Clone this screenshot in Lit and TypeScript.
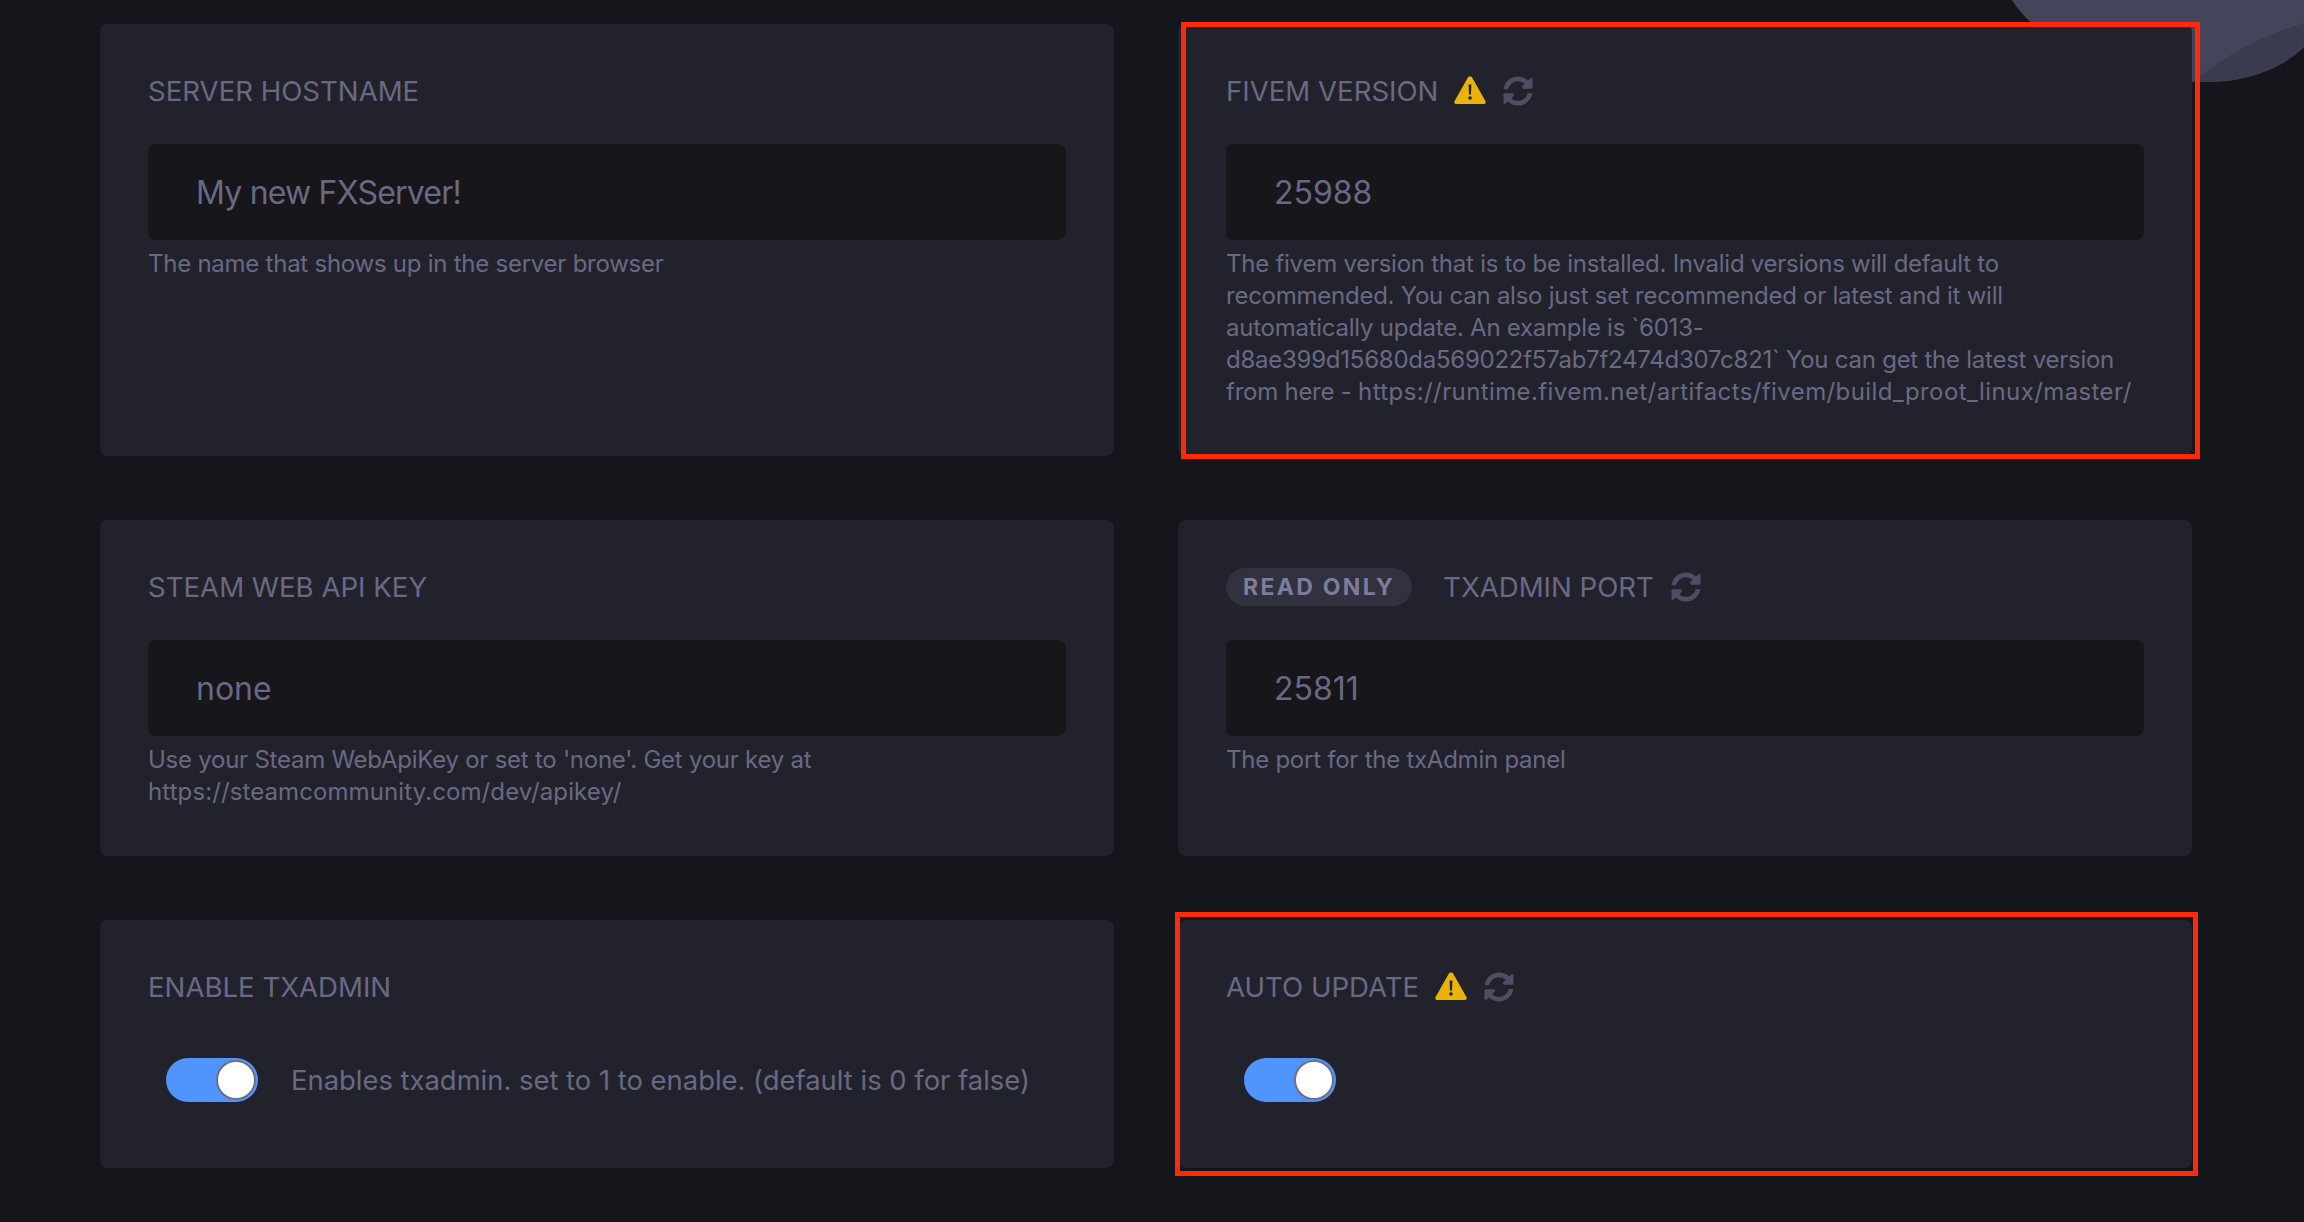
import { LitElement, html, css, svg, TemplateResult } from "lit";
import { customElement } from "lit/decorators.js";

const warnIcon = html`<svg class="icon warn" viewBox="0 0 32 28" aria-hidden="true">
  <path fill="#eab308" d="M16 0.5c1 0 1.8 0.5 2.4 1.4l13 23.2c0.9 1.6-0.2 2.9-1.9 2.9H2.5c-1.7 0-2.8-1.3-1.9-2.9l13-23.2C14.2 1 15 0.5 16 0.5z"/>
  <path fill="#22222c" d="M14.6 8.5h2.8l-0.4 10h-2z"/>
  <circle cx="16" cy="22" r="1.8" fill="#22222c"/>
</svg>`;

const syncIcon = html`<svg class="icon sync" viewBox="0 0 512 512" aria-hidden="true">
  <path fill="#4d4d63" d="M370.7 133.3C339.5 104 298.9 88 255.800 88c-77.500 .1-144.300 53.200-162.800 126.900-1.300 5.400-6.100 9.100-11.600 9.100H24.100c-7.500 0-13.200-6.800-11.800-14.200C33.900 94.900 134.800 8 256 8c66.400 0 126.800 26.100 171.300 68.700L463 41C478.100 25.900 504 36.600 504 57.900V192c0 13.300-10.700 24-24 24H345.900c-21.400 0-32.100-25.900-17-41l41.800-41.700zM32 296h134.100c21.400 0 32.100 25.900 17 41l-41.800 41.800c31.300 29.300 71.800 45.300 114.900 45.300 77.400-.1 144.300-53.100 162.800-126.800 1.300-5.400 6.100-9.100 11.600-9.100h57.300c7.500 0 13.200 6.800 11.800 14.200C478.100 417.100 377.200 504 256 504c-66.400 0-126.800-26.100-171.300-68.700L49 471C33.900 486.100 8 475.400 8 454.100V320c0-13.300 10.700-24 24-24z"/>
</svg>`;

type Field = {
  label: string;
  value?: string;
  tight?: boolean;
  desc?: string | TemplateResult;
  warn?: boolean;
  sync?: boolean;
  readOnly?: boolean;
  toggle?: boolean;
};

const fields: Field[] = [
  { label: "SERVER HOSTNAME", value: "My new FXServer!", tight: true, desc: "The name that shows up in the server browser" },
  {
    label: "FIVEM VERSION",
    value: "25988",
    warn: true,
    sync: true,
    desc: html`The fivem version that is to be installed. Invalid versions will default to recommended. You can also just set recommended or latest and it will automatically update. An example is \`6013-d8ae399d15680da569022f57ab7f2474d307c821\` You can get the latest version from here - <span class="url wide">https://runtime.fivem.net/artifacts/fivem/build_proot_linux/master/</span>`,
  },
  {
    label: "STEAM WEB API KEY",
    value: "none",
    desc: html`Use your Steam WebApiKey or set to 'none'. Get your key at <span class="url">https://steamcommunity.com/dev/apikey/</span>`,
  },
  { label: "TXADMIN PORT", value: "25811", readOnly: true, sync: true, desc: "The port for the txAdmin panel" },
  { label: "ENABLE TXADMIN", toggle: true, desc: "Enables txadmin. set to 1 to enable. (default is 0 for false)" },
  { label: "AUTO UPDATE", toggle: true, warn: true, sync: true },
];

@customElement("app-root")
export class AppRoot extends LitElement {
  static styles = css`
    :host {
      display: block;
      position: relative;
      height: 1222px;
      overflow: hidden;
      background: #15161b;
      font-family: Inter, "Liberation Sans", sans-serif;
      color: #6a6984;
    }
    .blob {
      position: absolute;
      top: 0;
      right: 0;
      width: 304px;
      height: 90px;
    }
    .grid {
      position: relative;
      display: grid;
      grid-template-columns: 1014px 1014px;
      gap: 64px;
      padding: 24px 112px 0 100px;
    }
    .card {
      background: #22222c;
      border-radius: 8px;
      padding: 48px;
    }
    .head {
      display: flex;
      align-items: center;
      height: 38px;
      margin-bottom: 34px;
      font-size: 27.6px;
    }
    .head.flush {
      margin-bottom: 0;
    }
    .badge {
      display: flex;
      align-items: center;
      height: 38px;
      padding: 0 17px;
      margin-right: 31px;
      border-radius: 19px;
      background: #31313f;
      color: #7d7d9b;
      font-size: 23px;
      font-weight: 700;
      letter-spacing: 2.3px;
    }
    .icon {
      flex: none;
    }
    .warn {
      width: 32px;
      height: 28px;
      margin-left: 16px;
      margin-top: -2px;
    }
    .sync {
      width: 30px;
      height: 30px;
      margin-left: 17px;
    }
    .input {
      display: flex;
      align-items: center;
      height: 96px;
      padding: 0 48px;
      border-radius: 8px;
      background: #16161b;
      font-size: 32px;
    }
    .input.tight {
      letter-spacing: -0.8px;
    }
    .desc {
      margin-top: 8px;
      font-size: 24px;
      line-height: 32px;
      letter-spacing: -0.25px;
    }
    .url {
      letter-spacing: 0.1px;
    }
    .url.wide {
      letter-spacing: 0.4px;
    }
    .toggle-row {
      display: flex;
      align-items: center;
      gap: 33px;
      height: 44px;
      margin: 52px 0 18px 18px;
      font-size: 27.4px;
    }
    .toggle {
      position: relative;
      flex: none;
      width: 92px;
      height: 44px;
      border-radius: 22px;
      background: #4f94ff;
    }
    .knob {
      position: absolute;
      top: 2px;
      right: 2px;
      width: 36px;
      height: 36px;
      border: 2px solid #6f6f85;
      border-radius: 50%;
      background: #fff;
    }
    .mark {
      position: absolute;
      border: 5px solid #ff2a08;
      box-sizing: border-box;
      pointer-events: none;
    }
    .mark.one {
      left: 1181px;
      top: 22px;
      width: 1019px;
      height: 437px;
    }
    .mark.two {
      left: 1175px;
      top: 912px;
      width: 1023px;
      height: 264px;
    }
  `;

  private renderField(f: Field) {
    return html`<section class="card">
      ${f.toggle
        ? html`<div class="head flush">${this.renderHead(f)}</div>
            <div class="toggle-row">
              <span class="toggle"><span class="knob"></span></span>
              ${f.desc ? html`<span>${f.desc}</span>` : ""}
            </div>`
        : html`<div class="head">${this.renderHead(f)}</div>
            <div class="input ${f.tight ? "tight" : ""}">${f.value}</div>
            <div class="desc">${f.desc}</div>`}
    </section>`;
  }

  private renderHead(f: Field) {
    return html`${f.readOnly ? html`<span class="badge">READ ONLY</span>` : ""}
      <span>${f.label}</span>
      ${f.warn ? warnIcon : ""} ${f.sync ? syncIcon : ""}`;
  }

  render() {
    return html`
      <svg class="blob" viewBox="0 0 304 90" aria-hidden="true">
        ${svg`<path fill="#44445a" d="M12 0C40 45 120 82 205 82C245 82 280 70 304 47V0z"/>
        <path fill="#3b3b4f" d="M196 80C225 55 262 36 304 23V47C280 70 245 82 205 82z"/>`}
      </svg>
      <div class="grid">${fields.map((f) => this.renderField(f))}</div>
      <div class="mark one"></div>
      <div class="mark two"></div>
    `;
  }
}
